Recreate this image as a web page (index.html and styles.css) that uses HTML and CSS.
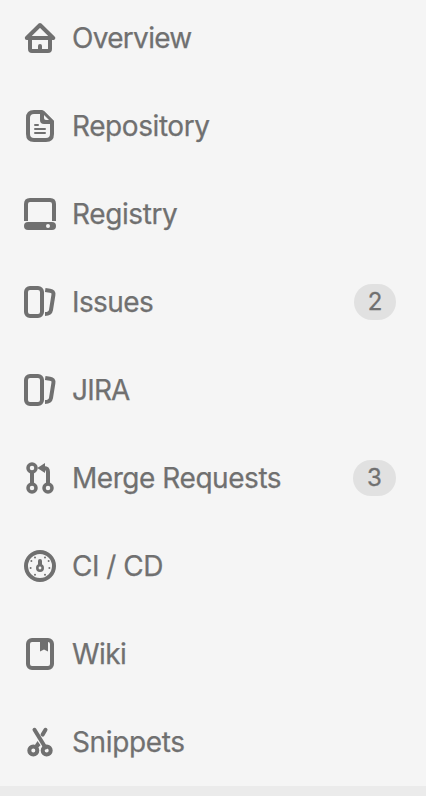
FILE: index.html
```html
<!DOCTYPE html>
<html lang="en">
<head>
<meta charset="utf-8">
<title>Project navigation</title>
<link rel="stylesheet" href="styles.css">
</head>
<body>
<nav class="sidebar">
  <ul class="menu">
    <li class="item"><svg class="icon" viewBox="0 0 32 32"><path class="line" d="M2.8 16 16 3 29.2 16ZM6 17v10q0 2 2 2h16q2 0 2-2V17"/><path d="M14 28v-4a2 2 0 0 1 4 0v4z"/></svg><span class="label overview">Overview</span></li>
    <li class="item"><svg class="icon" viewBox="0 0 32 32"><path class="line" d="M18 2H10Q4 2 4 8v16q0 6 6 6h12q6 0 6-6V12Z"/><path d="M16 1h4l10 10v3H20q-4 0-4-4z"/><path class="cut" d="M20 5v3q0 2 2 2h3z"/><path class="thin" d="M11 15h3M11 19h10M11 23h10"/></svg><span class="label repository">Repository</span></li>
    <li class="item"><svg class="icon" viewBox="0 0 32 32"><path class="line butt" d="M2 23V6q0-4 4-4h20q4 0 4 4v17"/><rect y="24" width="32" height="8" rx="4"/><circle class="cut" cx="24" cy="28" r="2"/></svg><span class="label registry">Registry</span></li>
    <li class="item"><svg class="icon" viewBox="0 0 32 32"><rect class="line" x="2" y="2" width="16" height="28" rx="4"/><path class="line butt" d="M21.2 4 26 4.7Q30 5.2 29.4 9L27 24Q26.3 28 21 28"/></svg><span class="label issues">Issues</span><span class="badge">2</span></li>
    <li class="item"><svg class="icon" viewBox="0 0 32 32"><rect class="line" x="2" y="2" width="16" height="28" rx="4"/><path class="line butt" d="M21.2 4 26 4.7Q30 5.2 29.4 9L27 24Q26.3 28 21 28"/></svg><span class="label jira">JIRA</span></li>
    <li class="item"><svg class="icon" viewBox="0 0 32 32"><g class="ring"><circle cx="8" cy="6" r="4"/><circle cx="8" cy="26" r="4"/><circle cx="24" cy="26" r="4"/></g><path class="line butt" d="M8 10v12M18 6h2q4 0 4 4v12"/><path d="M13.3 6 21 1v10z"/></svg><span class="label merge">Merge Requests</span><span class="badge wide">3</span></li>
    <li class="item"><svg class="icon" viewBox="0 0 32 32"><circle class="line" cx="16" cy="16" r="14"/><circle class="hub" cx="16" cy="18" r="2.7"/><path d="M14 16v-5a2 2 0 0 1 4 0v5z"/><g><circle cx="11" cy="7.4" r="1"/><circle cx="21" cy="7.4" r="1"/><circle cx="7.4" cy="11" r="1"/><circle cx="24.6" cy="11" r="1"/><circle cx="6.6" cy="18" r="1"/><circle cx="25.4" cy="18" r="1"/><circle cx="11" cy="24.8" r="1"/><circle cx="21" cy="24.8" r="1"/></g></svg><span class="label cicd">CI / CD</span></li>
    <li class="item"><svg class="icon" viewBox="0 0 32 32"><rect class="line" x="4" y="2" width="24" height="28" rx="4"/><path d="M16 3h8v10.5l-4-2-4 2z"/></svg><span class="label wiki">Wiki</span></li>
    <li class="item"><svg class="icon" viewBox="0 0 32 32"><g class="scissor"><circle cx="9.3" cy="24.4" r="4"/><circle cx="22.7" cy="24.4" r="4"/></g><path class="line" d="M10.5 3.8 21.4 21.5M21.5 3.8 18.6 8.6"/><path d="M10 20.5 13.5 15l3 4.2-4 4z"/></svg><span class="label snippets">Snippets</span></li>
  </ul>
  <div class="footer"></div>
</nav>
</body>
</html>
```
FILE: styles.css
```css
body {
  margin: 0;
  background: #f5f5f5;
  color: #707070;
  font-family: Inter, "Liberation Sans", sans-serif;
}
.sidebar {
  height: 796px;
  overflow: hidden;
  display: flex;
  flex-direction: column;
}
.menu {
  height: 786px;
  flex: none;
  margin: 0;
  padding: 0;
  overflow: hidden;
  list-style: none;
}
.item {
  display: flex;
  align-items: center;
  height: 76px;
  margin-bottom: 12px;
  padding: 0 30px 0 24px;
}
.icon {
  flex: none;
  width: 32px;
  height: 32px;
  margin-right: 16px;
  fill: #707070;
}
.line, .thin, .ring, .hub, .scissor {
  fill: none;
  stroke: #707070;
  stroke-width: 4;
  stroke-linecap: round;
  stroke-linejoin: round;
}
.butt { stroke-linecap: butt; }
.thin { stroke-width: 2; }
.ring { stroke-width: 3.5; }
.hub { stroke-width: 2.6; }
.cut { fill: #f5f5f5; }
.label {
  font-size: 28px;
  line-height: 36px;
  white-space: nowrap;
  -webkit-text-stroke: 0.25px #707070;
}
.overview { letter-spacing: -0.7px; }
.repository { letter-spacing: -0.42px; }
.registry { letter-spacing: -0.4px; }
.issues { letter-spacing: -0.6px; }
.jira { letter-spacing: -0.8px; }
.merge { letter-spacing: -0.45px; }
.cicd { letter-spacing: -0.5px; }
.wiki { letter-spacing: -0.6px; }
.snippets { letter-spacing: -0.35px; }
.badge {
  box-sizing: border-box;
  width: 42px;
  height: 36px;
  margin-left: auto;
  border-radius: 18px;
  background: #e1e1e1;
  font-size: 24px;
  line-height: 35px;
  text-align: center;
  -webkit-text-stroke: 0.3px #707070;
}
.wide { width: 43px; }
.footer {
  flex: 1;
  background: #ebebeb;
}
```
